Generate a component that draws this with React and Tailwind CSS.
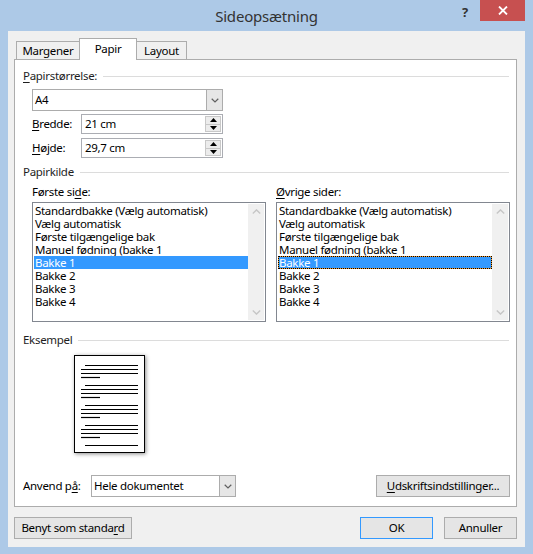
import React from "react";

const U = ({ children }) => (
  <span className="underline decoration-1 underline-offset-[2px]">{children}</span>
);

function Chevron({ up = false, color = "#5a5a5a", w = 9, h = 5 }) {
  return (
    <svg width={w} height={h} viewBox="0 0 9 5" className="block">
      {up ? (
        <polyline points="0.8,4.4 4.5,0.9 8.2,4.4" fill="none" stroke={color} strokeWidth="1.4" />
      ) : (
        <polyline points="0.8,0.6 4.5,4.1 8.2,0.6" fill="none" stroke={color} strokeWidth="1.4" />
      )}
    </svg>
  );
}

function Tri({ up }) {
  return (
    <svg width="7" height="4" viewBox="0 0 7 4" className="block">
      {up ? <polygon points="0,4 3.5,0 7,4" fill="#000" /> : <polygon points="0,0 3.5,4 7,0" fill="#000" />}
    </svg>
  );
}

function Section({ children, className = "" }) {
  return (
    <div className={"flex items-center h-[16px] " + className}>
      <span className="leading-[16px] whitespace-nowrap text-[#1e1e1e]">{children}</span>
      <div className="flex-1 h-px bg-[#dcdcdc] ml-[6px] mt-px" />
    </div>
  );
}

function Combo({ value, className = "" }) {
  return (
    <div className={"flex h-[22px] border border-[#acacac] bg-white " + className}>
      <div className="flex-1 pl-[2px] leading-[20px] text-black">{value}</div>
      <div className="w-[16px] bg-[#e6e6e6] border-l border-[#acacac] flex items-center justify-center">
        <Chevron color="#606060" w={8} h={5} />
      </div>
    </div>
  );
}

function Spin({ value }) {
  return (
    <div className="flex w-[142px] h-[20px] border border-[#abadb3] bg-white">
      <div className="flex-1 pl-[3px] leading-[18px] text-black">{value}</div>
      <div className="w-[17px] flex flex-col py-px pr-px gap-0">
        <div className="flex-1 bg-[#ececec] border border-[#c8c8c8] flex items-center justify-center">
          <Tri up />
        </div>
        <div className="flex-1 bg-[#ececec] border border-t-0 border-[#c8c8c8] flex items-center justify-center">
          <Tri />
        </div>
      </div>
    </div>
  );
}

const ITEMS = [
  "Standardbakke (Vælg automatisk)",
  "Vælg automatisk",
  "Første tilgængelige bak",
  "Manuel fødning (bakke 1",
  "Bakke 1",
  "Bakke 2",
  "Bakke 3",
  "Bakke 4",
];

function ListBox({ focused }) {
  return (
    <div className="flex w-[234px] h-[120px] border border-[#828790] bg-white p-px">
      <div className="flex-1 flex flex-col">
        {ITEMS.map((t, i) =>
          i === 4 ? (
            focused ? (
              <div key={i} className="h-[13px] bg-[#f29a2e]">
                <div className="h-[13px] border border-dotted border-black bg-[#3399ff] bg-clip-padding text-white leading-[11px] pl-0 whitespace-nowrap">
                  {t}
                </div>
              </div>
            ) : (
              <div key={i} className="h-[13px] bg-[#3399ff] text-white leading-[13px] pl-px whitespace-nowrap">
                {t}
              </div>
            )
          ) : (
            <div key={i} className="h-[13px] leading-[13px] pl-px text-black whitespace-nowrap">
              {t}
            </div>
          )
        )}
      </div>
      <div className="w-[16px] bg-[#f0f0f0] flex flex-col items-center justify-between py-[5px]">
        <Chevron up color="#c6c6c6" />
        <Chevron color="#c6c6c6" />
      </div>
    </div>
  );
}

function Button({ children, className = "", blue = false }) {
  return (
    <div
      className={
        "h-[22px] border bg-[#e5e5e5] flex items-center justify-center text-black " +
        (blue ? "border-[#3399ff] " : "border-[#acacac] ") +
        className
      }
    >
      {children}
    </div>
  );
}

function PagePreview() {
  const groups = [10, 30, 50, 70];
  return (
    <div className="w-[71px] h-[98px] border border-black bg-white shadow-[1px_1px_4px_rgba(0,0,0,0.45)]">
      <svg width="69" height="96" viewBox="1 1 69 96" className="block">
        {groups.map((y) => (
          <g key={y} stroke="#000" strokeWidth="1.2">
            <line x1="11" y1={y + 0.5} x2="64" y2={y + 0.5} />
            <line x1="7" y1={y + 4.5} x2="64" y2={y + 4.5} />
            <line x1="7" y1={y + 8.5} x2="64" y2={y + 8.5} />
            <line x1="7" y1={y + 12.5} x2="26" y2={y + 12.5} />
          </g>
        ))}
        <line x1="11" y1="90.5" x2="64" y2="90.5" stroke="#000" strokeWidth="1.2" />
      </svg>
    </div>
  );
}

export default function App() {
  return (
    <div className="w-[533px] h-[554px] bg-[#adc9e7] flex flex-col font-['Noto_Sans',sans-serif] text-[11.5px] tracking-[-0.3px] text-black overflow-hidden">
      {/* Title bar */}
      <div className="h-[31px] grid grid-cols-[1fr_auto_1fr] shrink-0">
        <div />
        <div className="text-[15px] tracking-[-0.2px] leading-[31px] text-[#333333] pt-px">Sideopsætning</div>
        <div className="flex justify-end items-start">
          <div className="text-[13px] font-bold leading-[24px] text-[#333] mr-[12px]">?</div>
          <div className="w-[45px] h-[21px] bg-[#c75050] flex items-center justify-center mr-[8px]">
            <svg width="10" height="9" viewBox="0 0 10 9">
              <path d="M1 0.5 L9 8.5 M9 0.5 L1 8.5" stroke="#fff" strokeWidth="1.8" />
            </svg>
          </div>
        </div>
      </div>

      {/* Client area */}
      <div className="ml-[8px] w-[517px] h-[516px] bg-[#f0f0f0] pl-[6px] flex flex-col">
        {/* Tabs */}
        <div className="mt-[7px] h-[21px] flex items-end pl-[2px]">
          <div className="w-[64px] h-[18px] border border-b-0 border-[#acacac] bg-[#f0f0f0] flex items-center justify-center leading-[16px] text-black">
            Margener
          </div>
          <div className="relative z-10 -ml-px w-[58px] h-[22px] -mb-px border border-b-0 border-[#acacac] bg-white flex items-start justify-center pt-[2px] leading-[16px]">
            Papir
          </div>
          <div className="-ml-px w-[51px] h-[18px] border border-b-0 border-[#acacac] bg-[#f0f0f0] flex items-center justify-center leading-[16px]">
            Layout
          </div>
        </div>

        {/* Panel */}
        <div className="w-[503px] h-[448px] border border-[#acacac] bg-white pl-[8px] pr-[7px] pt-[8px] flex flex-col">
          <Section>
            <U>P</U>apirstørrelse:
          </Section>
          <Combo value="A4" className="mt-[5px] ml-[9px] w-[191px]" />
          <div className="mt-[3px] ml-[9px] flex items-center">
            <div className="w-[49px] leading-[16px]">
              <U>B</U>redde:
            </div>
            <Spin value="21 cm" />
          </div>
          <div className="mt-[4px] ml-[9px] flex items-center">
            <div className="w-[49px] leading-[16px]">
              <U>H</U>øjde:
            </div>
            <Spin value="29,7 cm" />
          </div>

          <Section className="mt-[6px]">Papirkilde</Section>
          <div className="mt-[4px] ml-[9px] flex gap-[10px]">
            <div className="flex flex-col gap-[2px]">
              <div className="leading-[16px]">
                Første si<U>d</U>e:
              </div>
              <ListBox />
            </div>
            <div className="flex flex-col gap-[2px]">
              <div className="leading-[16px]">
                <U>Ø</U>vrige sider:
              </div>
              <ListBox focused />
            </div>
          </div>

          <Section className="mt-[10px]">Eksempel</Section>
          <div className="mt-[7px] ml-[51px]">
            <PagePreview />
          </div>

          <div className="mt-[22px] flex items-center">
            <div className="w-[68px] leading-[16px]">
              Anvend p<U>å</U>:
            </div>
            <Combo value="Hele dokumentet" className="w-[145px] pl-0" />
            <div className="flex-1" />
            <Button className="w-[134px] -mr-px">
              <span>
                <U>U</U>dskriftsindstillinger...
              </span>
            </Button>
          </div>
        </div>

        {/* Bottom buttons */}
        <div className="mt-[10px] w-[503px] flex">
          <Button className="w-[118px]">
            <span>
              Benyt som standa<U>r</U>d
            </span>
          </Button>
          <div className="flex-1" />
          <Button blue className="w-[73px]">
            OK
          </Button>
          <Button className="w-[73px] ml-[11px]">Annuller</Button>
        </div>
      </div>
    </div>
  );
}
